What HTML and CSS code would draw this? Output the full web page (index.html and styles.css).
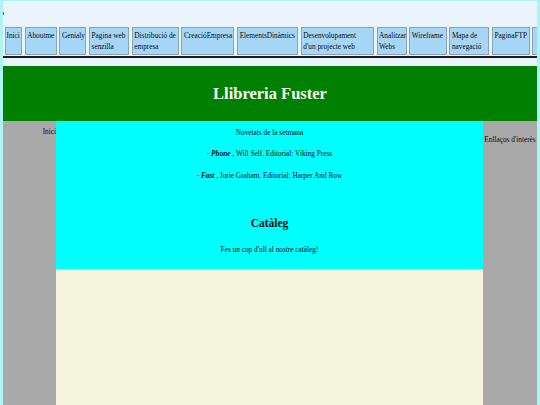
FILE: index.html
```html
<!DOCTYPE html>
<html lang="ca">
<head>
<meta charset="utf-8">
<title>Llibreria Fuster</title>
<link rel="stylesheet" href="styles.css">
</head>
<body>
<div class="page">
  <header class="top">
    <span class="dot"></span>
    <nav class="menu">
      <a class="tab tab-inici" href="#">Inici</a>
      <a class="tab tab-about" href="#">Aboutme</a>
      <a class="tab tab-genialy" href="#">Genialy</a>
      <a class="tab tab-pagina" href="#">Pagina web<br>senzilla</a>
      <a class="tab tab-distrib" href="#">Distribució de<br>empresa</a>
      <a class="tab tab-creacio" href="#">CreacióEmpresa</a>
      <a class="tab tab-elements" href="#">ElementsDinàmics</a>
      <a class="tab tab-desenv" href="#">Desenvolupament<br>d'un projecte web</a>
      <a class="tab tab-analitzar" href="#">Analitzar<br>Webs</a>
      <a class="tab tab-wire" href="#">Wireframe</a>
      <a class="tab tab-mapa" href="#">Mapa de<br>navegació</a>
      <a class="tab tab-ftp" href="#">PaginaFTP</a>
      <a class="tab tab-more" href="#" aria-label="Més"></a>
    </nav>
    <div class="rule"></div>
  </header>
  <div class="banner"><h1>Llibreria Fuster</h1></div>
  <div class="layout">
    <aside class="side-left">Inici</aside>
    <main class="main">
      <section class="news">
        <p>Novetats de la setmana</p>
        <p><b><i>- Phone</i></b> , Will Self. Editorial: Viking Press</p>
        <p><b><i>- Fast</i></b> , Jorie Graham. Editorial: Harper And Row</p>
        <h2>Catàleg</h2>
        <p class="last">Fes un cop d'ull al nostre catàleg!</p>
      </section>
      <section class="catalog"></section>
    </main>
    <aside class="side-right">Enllaços d'interès</aside>
  </div>
</div>
</body>
</html>
```
FILE: styles.css
```css
html, body {
  margin: 0;
}
body {
  background: #aef4f4;
  padding: 1px 3px 0;
  font-family: "Liberation Serif", "Times New Roman", serif;
  font-size: 7.3px;
  color: #0a0a0a;
  overflow: hidden;
}
.page {
  background: #eaf4fc;
  min-height: calc(100vh - 1px);
  display: flex;
  flex-direction: column;
}
.top {
  padding: 11px 0 8px;
}
.dot {
  display: block;
  width: 1px;
  height: 3px;
  background: #5a6a9a;
}
.menu {
  display: flex;
  gap: 2.7px;
  margin-top: 12px;
  padding-left: 1.5px;
  overflow: hidden;
}
.tab {
  flex: none;
  box-sizing: border-box;
  white-space: nowrap;
  background: #a6d6f6;
  border: 1.5px solid #8ca3b5;
  padding: 2px 1.5px;
  line-height: 11px;
  color: #0a0a0a;
  text-decoration: none;
}
.tab-inici { width: 17.5px; padding-left: 1px; }
.tab-about { width: 32px; }
.tab-genialy { width: 27px; }
.tab-pagina { width: 40px; }
.tab-distrib { width: 47px; }
.tab-creacio { width: 53px; }
.tab-elements { width: 61px; }
.tab-desenv { width: 73px; }
.tab-analitzar { width: 30px; }
.tab-wire { width: 37.5px; }
.tab-mapa { width: 40px; }
.tab-ftp { width: 37.5px; }
.tab-more { width: 40px; }
.rule {
  margin-top: 1px;
  border-top: 2px solid #1c1c1c;
}
.banner {
  background: #008000;
  height: 55px;
  display: flex;
  align-items: center;
  justify-content: center;
}
.banner h1 {
  margin: 0;
  color: #fbfbf0;
  font-size: 16.5px;
  font-weight: bold;
}
.layout {
  flex: 1;
  display: grid;
  grid-template-columns: 53px 1fr 54px;
}
.side-left {
  background: #a9a9a9;
  text-align: right;
  padding-top: 5px;
  line-height: 11px;
  white-space: nowrap;
}
.side-right {
  background: #a9a9a9;
  text-align: center;
  padding-top: 12.5px;
  line-height: 11px;
  white-space: nowrap;
}
.main {
  display: flex;
  flex-direction: column;
}
.news {
  background: #00ffff;
  text-align: center;
  padding: 5.5px 0 14.5px;
}
.news p {
  margin: 0 0 10.5px;
  line-height: 11px;
}
.news p.last {
  margin-bottom: 0;
}
.news h2 {
  margin: 34.5px 0 12.5px;
  font-size: 11.5px;
  line-height: 16px;
}
.catalog {
  flex: 1;
  background: #f5f5dc;
  border-top: 1px solid #c4f6ee;
}
```
